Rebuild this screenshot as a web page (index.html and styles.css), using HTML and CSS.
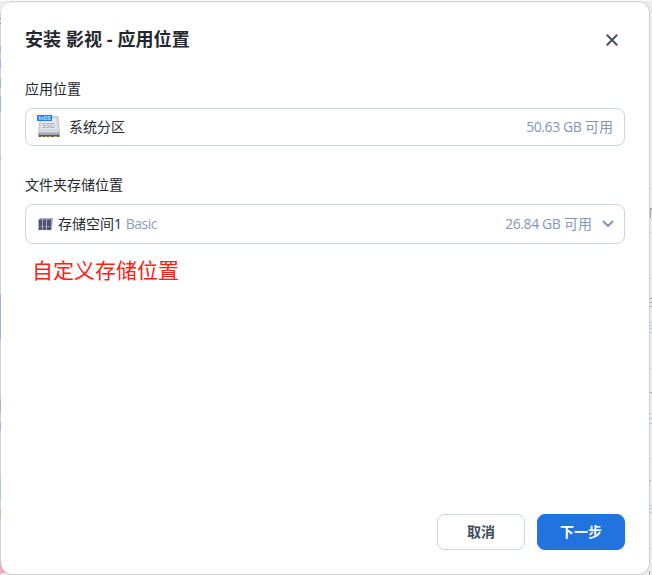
FILE: index.html
```html
<!DOCTYPE html>
<html lang="zh-CN">
<head>
<meta charset="utf-8">
<title>安装 影视</title>
<link rel="stylesheet" href="styles.css">
</head>
<body>
<svg class="backdrop" width="652" height="575" aria-hidden="true">
  <path fill="#ececec" d="M0 0h652v575H0z"/>
  <path fill="#f9f9f9" d="M0 0h652v1H0z"/>
  <path fill="#d2d2d2" d="M0 12h1v563H0z"/>
  <path fill="#9bb5da" d="M0 46h1v7H0zM0 59h1v9H0zM0 78h1v9H0zM0 97h1v14H0zM0 294h1v45H0z"/>
  <path fill="#999" d="M0 18h1v1H0zM0 23h1v1H0zM0 158h1v1H0z"/>
  <path fill="#baaacb" d="M0 399h1v14H0zM0 422h1v8H0z"/>
  <path fill="#a7cbc9" d="M0 478h1v22H0z"/>
  <path fill="#dcb4a0" d="M0 509h1v9H0z"/>
  <path fill="#eeaac3" d="M0 561h8v12H0z"/>
  <path fill="#d999ad" d="M26 574h14v1H26z"/>
  <path fill="#999" d="M53 574h4v1h-4zM68 574h10v1H68zM81 574h12v1H81zM360 574h10v1h-10zM382 574h21v1h-21z"/>
  <path fill="#9eabad" d="M288 574h13v1h-13zM330 574h4v1h-4zM587 574h45v1h-45z"/>
  <path fill="#d5d9de" d="M650 188h2v1h-2zM650 232h2v1h-2zM650 278h2v1h-2zM650 368h2v1h-2zM650 458h2v1h-2zM650 548h2v1h-2z"/>
  <path fill="#a5a5a5" d="M649 208h3v2h-1v8h-1v-8h-1zM649 298h3v1h-2v3h2v1h-2v3h2v1h-3zM649 388h1v4h2v1h-2v5h-1zM649 478l2 3-2 2zM649 571h1v4h-1z"/>
  <path stroke="#b9c3cd" d="M650 322.500h2M650 325.500h2M650 328.500h2M650 332.500h2M650 413.500h2M650 418.500h2M650 423.500h2M650 505.500h2M650 508.500h2M650 512.500h2"/>
</svg>
<main class="dialog">
  <header class="dialog-header">
    <h1>安装 影视 - 应用位置</h1>
    <button class="close" aria-label="关闭">
      <svg width="12" height="12" viewBox="0 0 12 12"><path d="M1.300 1.300l9.400 9.400M10.700 1.300l-9.400 9.400"/></svg>
    </button>
  </header>
  <section class="group">
    <h2>应用位置</h2>
    <div class="field">
      <svg class="ssd" width="24" height="24" viewBox="0 0 24 24">
        <path fill="#bfc3ce" d="M3 1h18.500L23 18v4H1V18z"/>
        <path fill="#d5d8e1" d="M4 2h16.500L22 17H2z"/>
        <path fill="#e7e9ef" d="M5 4h14l1 10H4z"/>
        <path fill="#a3a7b5" d="M1 18h22v3H1z"/>
        <path fill="#555967" d="M2 20h20v2H2z"/>
        <path fill="#d6a530" d="M4 21h2v1H4zM8 21h2v1H8zM12 21h2v1h-2zM17 21h3v1h-3z"/>
        <text class="ssd-name" x="5" y="13" textLength="13" lengthAdjust="spacingAndGlyphs">SSD</text>
        <path fill="#2380ed" d="M0 0h15v6H0z"/>
        <text class="ssd-tag" x="1.500" y="5" textLength="12" lengthAdjust="spacingAndGlyphs">fnOS</text>
      </svg>
      <span class="name">系统分区</span>
      <span class="free"><span class="latin">50.63 GB</span> 可用</span>
    </div>
  </section>
  <section class="group storage">
    <h2>文件夹存储位置</h2>
    <div class="field select">
      <svg class="array" width="15" height="13" viewBox="0 0 15 13">
        <path fill="#a9abc0" d="M2 0h13l-1 11-1 1H0V2z"/>
        <path fill="#50536f" d="M1 2h3v10H1zM5 2h3v10H5zM9 2h4v10H9z"/>
        <path fill="#7e829e" d="M2 1h3L4 2H1zM6 1h3L8 2H5zM10 1h4l-1 1H9zM1 8h12v1H1z"/>
        <path stroke="#a9abc0" d="M4.500 2v10M8.500 2v10"/>
      </svg>
      <span class="name">存储空间1 <span class="type">Basic</span></span>
      <span class="free"><span class="latin">26.84 GB</span> 可用</span>
      <svg class="chevron" width="12" height="8" viewBox="0 0 12 8"><path d="M1.500 1.500L6 6l4.500-4.500"/></svg>
    </div>
  </section>
  <p class="note">自定义存储位置</p>
  <footer class="actions">
    <button class="btn">取消</button>
    <button class="btn primary">下一步</button>
  </footer>
</main>
</body>
</html>
```
FILE: styles.css
```css
* { box-sizing: border-box; }
body {
  margin: 0;
  width: 652px;
  height: 575px;
  overflow: hidden;
  padding: 1px;
  font-family: "Open Sans", "Noto Sans CJK SC", sans-serif;
  font-size: 14px;
  color: #24272d;
}
button { font-family: inherit; }
.backdrop { position: absolute; left: 0; top: 0; z-index: -1; }
.dialog {
  display: flex;
  flex-direction: column;
  width: 649px;
  height: 574px;
  padding: 0 24px 24px;
  background: #fff;
  border: 1px solid #cfcfcf;
  border-left: 0;
  border-radius: 12px;
}
.dialog-header {
  display: flex;
  align-items: center;
  justify-content: space-between;
  height: 75px;
  padding-bottom: 1px;
}
h1 { margin: 0; font-size: 18px; line-height: 26px; font-weight: 700; letter-spacing: 0.08px; }
.close { display: flex; padding: 6px 7px 4px 6px; border: 0; background: none; }
.close path { fill: none; stroke: #475166; stroke-width: 2; stroke-linecap: round; }
h2 { margin: 0 0 7px; font-size: 14px; line-height: 24px; font-weight: 400; }
.group { margin-bottom: 27px; }
.group.storage { margin-bottom: 0; }
.field {
  display: flex;
  align-items: center;
  height: 38px;
  padding: 0 11px;
  border: 1px solid #cbd5e1;
  border-radius: 8px;
  line-height: 20px;
}
.select { height: 40px; padding: 0 10px 0 12px; }
.ssd { margin-right: 8px; }
.ssd-name { font: 8px "Liberation Sans", sans-serif; fill: #8d919d; }
.ssd-tag { font: bold 5px "Liberation Sans", sans-serif; fill: #d8e9ff; }
.array { margin-right: 5px; }
.name { flex: 1; }
.type { color: #8c9db7; letter-spacing: -0.5px; }
.free { color: #8496b0; }
.latin { letter-spacing: -0.42px; }
.chevron { margin-left: 10px; }
.chevron path { fill: none; stroke: #8294ae; stroke-width: 2; stroke-linecap: round; stroke-linejoin: round; }
.note { margin: 11px 0 0 7px; font-size: 21px; line-height: 30px; color: #ff2015; }
.actions { display: flex; justify-content: flex-end; gap: 12px; margin-top: auto; }
.btn {
  width: 88px;
  height: 36px;
  padding: 0 0 2px;
  border: 1px solid #cbd5e1;
  border-radius: 8px;
  background: #fff;
  color: #414b5e;
  font-size: 14px;
  font-weight: 700;
}
.primary { border-color: #2173df; background: #2173df; color: #fff; }
```
